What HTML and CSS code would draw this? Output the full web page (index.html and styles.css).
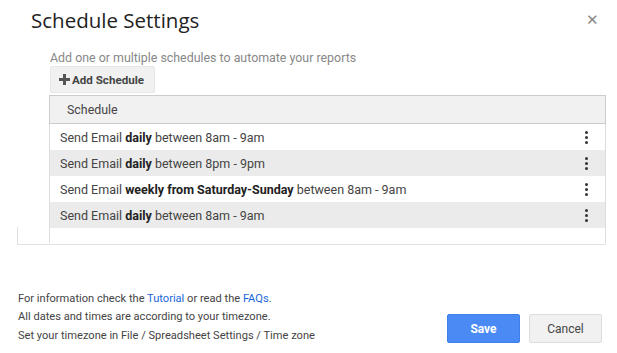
FILE: index.html
```html
<!DOCTYPE html>
<html lang="en">
<head>
  <meta charset="UTF-8">
  <title>Schedule Settings</title>
  <link rel="stylesheet" href="styles.css">
</head>
<body>

<div class="dialog">
  <div class="header">
    <h2>Schedule Settings</h2>
    <span class="close">&#x2715;</span>
  </div>

  <div class="content">
    <p class="hint">Add one or multiple schedules to automate your reports</p>
    <button class="add-btn">
      <svg width="11" height="11" viewBox="0 0 11 11"><path d="M4 0h3v4h4v3H7v4H4V7H0V4h4z" fill="#555"/></svg>
      Add Schedule
    </button>

    <div class="panel">
      <div class="table">
        <div class="thead">Schedule</div>
        <div class="row">
          <span>Send Email <b>daily</b> between 8am - 9am</span>
          <span class="kebab"><i></i><i></i><i></i></span>
        </div>
        <div class="row alt">
          <span>Send Email <b>daily</b> between 8pm - 9pm</span>
          <span class="kebab"><i></i><i></i><i></i></span>
        </div>
        <div class="row">
          <span>Send Email <b>weekly from Saturday-Sunday</b> between 8am - 9am</span>
          <span class="kebab"><i></i><i></i><i></i></span>
        </div>
        <div class="row alt">
          <span>Send Email <b>daily</b> between 8am - 9am</span>
          <span class="kebab"><i></i><i></i><i></i></span>
        </div>
      </div>
    </div>
  </div>

  <div class="footer">
    <div class="info">
      <div>For information check the <a href="#">Tutorial</a> or read the <a href="#">FAQs</a>.</div>
      <div>All dates and times are according to your timezone.</div>
      <div>Set your timezone in File / Spreadsheet Settings / Time zone</div>
    </div>
    <div class="actions">
      <button class="save">Save</button>
      <button class="cancel">Cancel</button>
    </div>
  </div>
</div>

</body>
</html>
```

FILE: styles.css
```css
body {
  margin: 0;
  font-family: Roboto, Arial, sans-serif;
  background: #fff;
  color: #444;
}
.dialog {
  width: 617px;
  height: 353px;
  position: relative;
}
.header {
  display: flex;
  justify-content: space-between;
  align-items: center;
  padding: 6px 18px 0 31px;
  height: 28px;
}
h2 {
  margin: 0;
  font-family: "Open Sans", Roboto, sans-serif;
  font-weight: 400;
  font-size: 20.5px;
  color: #222;
}
.close {
  font-size: 15px;
  font-weight: 300;
  color: #888;
}
.content {
  padding: 0 11px 0 50px;
}
.hint {
  margin: 17px 0 0;
  font-size: 12.4px;
  line-height: 14px;
  color: #888;
}
.add-btn {
  display: flex;
  align-items: center;
  gap: 2px;
  margin-top: 1px;
  width: 105px;
  height: 27px;
  padding: 0 7px 0 8px;
  white-space: nowrap;
  background: #f1f1f1;
  border: 1px solid #e6e6e6;
  border-radius: 2px;
  font-family: Roboto, Arial, sans-serif;
  font-size: 11.6px;
  font-weight: 700;
  color: #444;
}
.panel {
  position: relative;
  margin: 2px 0 0 -33px;
  padding-left: 32px;
  border-bottom: 1px solid #e0e0e0;
  height: 149px;
}
.panel::before {
  content: "";
  position: absolute;
  left: 0;
  bottom: -1px;
  height: 18px;
  border-left: 1px solid #e0e0e0;
  border-bottom-left-radius: 3px;
}
.table {
  height: 148px;
  border-left: 1px solid #ddd;
  border-right: 1px solid #ddd;
}
.thead {
  height: 27px;
  line-height: 27px;
  padding-left: 17px;
  background: #f1f1f1;
  border: 1px solid #ccc;
  margin: 0 -1px;
  font-size: 12.4px;
  color: #444;
}
.row {
  display: flex;
  justify-content: space-between;
  align-items: center;
  height: 26px;
  padding: 0 17px 0 10px;
  font-size: 12.5px;
  color: #444;
}
.row b {
  color: #222;
}
.row.alt {
  background: #ebebeb;
}
.kebab {
  display: flex;
  flex-direction: column;
  gap: 2px;
}
.kebab i {
  width: 3px;
  height: 3px;
  background: #333;
  border-radius: 50%;
}
.footer {
  display: flex;
  justify-content: space-between;
  align-items: flex-end;
  padding: 0 15px 10px 18px;
  position: absolute;
  left: 0;
  right: 0;
  bottom: 0;
}
.info {
  font-size: 11.1px;
  line-height: 18.5px;
  color: #444;
  margin-bottom: -2px;
}
.info a {
  color: #1a66d9;
  text-decoration: none;
}
.actions {
  display: flex;
  gap: 9px;
}
.actions button {
  width: 73px;
  height: 29px;
  border-radius: 2px;
  font-family: Roboto, Arial, sans-serif;
  font-size: 12px;
}
.save {
  background: #4a8af4;
  border: 1px solid #3f7fe9;
  color: #fff;
  font-weight: 700;
}
.cancel {
  background: #f1f1f1;
  border: 1px solid #ddd;
  color: #444;
}
```
